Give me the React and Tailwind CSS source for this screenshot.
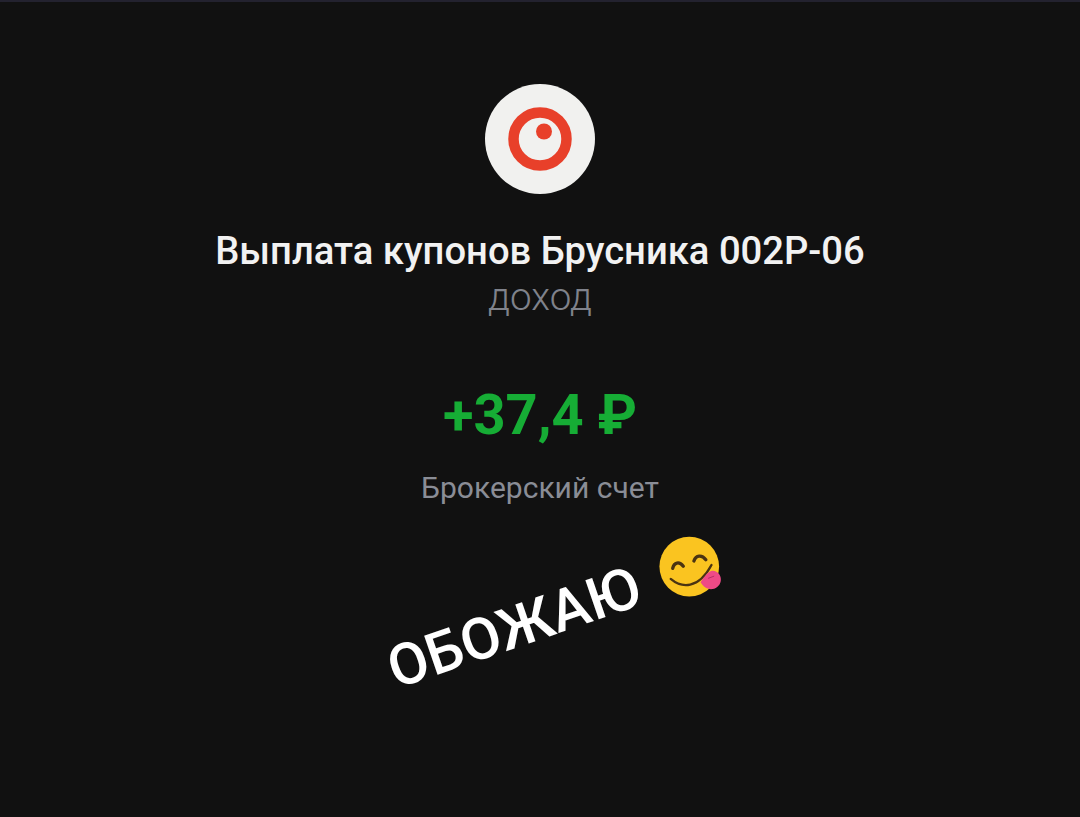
const Logo = () => (
  <div className="w-[110px] h-[110px] rounded-full bg-[#f1f1ef] flex items-center justify-center">
    <svg width="64" height="64" viewBox="0 0 64 64">
      <circle cx="32" cy="32" r="26.5" fill="none" stroke="#e8402a" strokeWidth="10.5" />
      <circle cx="36" cy="24.5" r="8" fill="#e8402a" />
    </svg>
  </div>
)

const Emoji = () => (
  <svg width="67" height="63" viewBox="40 20 200 190">
    <circle cx="138" cy="113" r="90" fill="#fac420" />
    <path d="M88 118 C92 100 108 96 120 112" fill="none" stroke="#4a3412" strokeWidth="10" strokeLinecap="round" />
    <path d="M152 96 C158 78 176 76 188 92" fill="none" stroke="#4a3412" strokeWidth="10" strokeLinecap="round" />
    <path d="M82 150 C115 178 165 182 205 108" fill="none" stroke="#4a3412" strokeWidth="7" strokeLinecap="round" />
    <path d="M172 160 C180 148 192 130 204 126 C222 122 236 140 233 156 C230 174 212 184 196 180 C186 178 178 170 172 160 Z" fill="#ef4a86" />
    <path d="M196 148 L212 142" fill="none" stroke="#b52f62" strokeWidth="3" strokeLinecap="round" />
  </svg>
)

export default function App() {
  return (
    <div className="w-[1080px] h-[817px] bg-[#111111] border-t-2 border-[#23222f] overflow-hidden flex flex-col items-center font-['Roboto',sans-serif]">
      <div className="mt-[82px]">
        <Logo />
      </div>
      <h1 className="mt-[33px] text-[38.2px] leading-[48px] font-medium text-[#f2f2f2]">
        Выплата купонов Брусника 002Р-06
      </h1>
      <p className="text-[38.5px] leading-[44px] font-light text-[#7f828b]">доход</p>
      <p className="mt-[66px] text-[56px] leading-[60px] font-bold text-[#16ad35]">+37,4 ₽</p>
      <p className="mt-[25px] text-[30px] leading-[36px] text-[#8a8d96]">Брокерский счет</p>
      <div className="mt-[75px] ml-[31px] flex items-center gap-[21px] -rotate-[19deg]">
        <span className="text-[58px] leading-[64px] font-medium text-white">ОБОЖАЮ</span>
        <div className="rotate-[19deg]">
          <Emoji />
        </div>
      </div>
    </div>
  )
}
